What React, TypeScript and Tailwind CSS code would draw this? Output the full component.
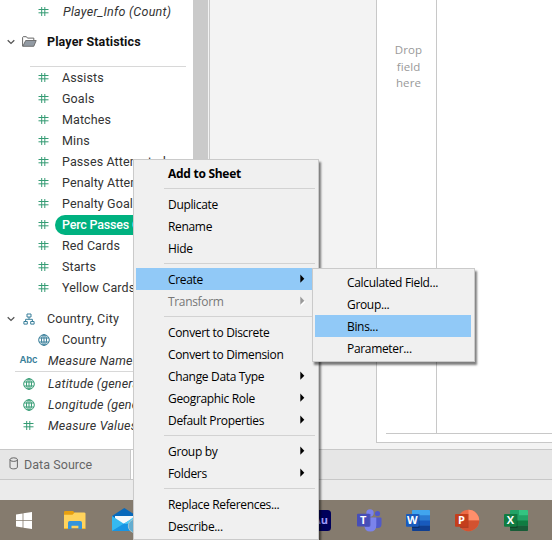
import React from "react";

const Hash = () => (
  <svg width="11" height="11" viewBox="0 0 11 11" className="block shrink-0" fill="none" stroke="#359c74" strokeWidth="1">
    <path d="M3.7 1v9M6.8 1v9M.5 3.5h10M.5 6.8h10" />
  </svg>
);

const Globe = ({ color }: { color: string }) => (
  <svg width="12" height="12" viewBox="0 0 12 12" className="block shrink-0" fill="none" stroke={color} strokeWidth="1">
    <circle cx="6" cy="6" r="5.3" />
    <ellipse cx="6" cy="6" rx="2.5" ry="5.3" />
    <path d="M6 .7v10.6M1.2 4h9.6M1.2 8h9.6" />
  </svg>
);

const Chevron = () => (
  <svg width="8" height="6" viewBox="0 0 8 6" className="block" fill="none" stroke="#555" strokeWidth="1.3">
    <path d="M.7 1.2 4 4.4l3.3-3.2" />
  </svg>
);

const FolderOpen = () => (
  <svg width="15" height="11" viewBox="0 0 15 11" className="block">
    <path d="M.6 10.2V1.4L1.2.7h3.2l1.1 1.4h6.3v2" fill="none" stroke="#666" />
    <path d="M.8 10.3 3.7 4.5h10.5l-2.4 5.8z" fill="#929aa3" stroke="#666" strokeWidth=".9" />
  </svg>
);

const Hierarchy = () => (
  <svg width="12" height="12" viewBox="0 0 12 12" className="block" fill="none" stroke="#397f9a">
    <path d="M4 1h4v3H4zM.9 8.5h3.4v2.6H.9zM7.7 8.5h3.4v2.6H7.7zM6 4v2.3M2.6 8.5V6.3h6.8v2.2" />
  </svg>
);

const Field = ({ label, selected = false }: { label: string; selected?: boolean }) => (
  <div className="flex h-[21px] items-center pl-[38px]">
    <Hash />
    <div className={`ml-[6px] flex h-5 flex-1 items-center whitespace-nowrap pl-[7px] pt-[2px] ${selected ? "rounded-l-full bg-[#00b180] font-medium tracking-[-0.2px] text-white" : "tracking-[0.1px]"}`}>
      {label}
    </div>
  </div>
);

const Generated = ({ icon, label }: { icon: React.ReactNode; label: string }) => (
  <div className="flex h-[21px] items-center whitespace-nowrap">
    <div className="flex w-12 shrink-0 justify-center pl-[9px]">{icon}</div>
    <span className="pt-[2px] italic tracking-[0.2px]">{label}</span>
  </div>
);

const DataPane = () => (
  <aside className="h-[449px] w-[193px] shrink-0 overflow-hidden bg-white font-['Roboto',sans-serif] text-[12.5px] text-[#333]">
    <div className="mt-px flex h-[21px] items-center pl-[38px]">
      <Hash />
      <span className="ml-[14px] pt-[2px] italic tracking-[0.25px]">Player_Info (Count)</span>
    </div>
    <div className="mt-[9px] flex h-[21px] items-center pl-[7px]">
      <Chevron />
      <span className="ml-[7px]"><FolderOpen /></span>
      <span className="ml-[10px] pt-[2px] font-bold tracking-[0.12px] text-[#111]">Player Statistics</span>
    </div>
    <div className="ml-[30px] mt-[14px] h-px w-[156px] bg-[#d8d8d8]" />
    <div>
      <Field label="Assists" />
      <Field label="Goals" />
      <Field label="Matches" />
      <Field label="Mins" />
      <Field label="Passes Attempted" />
      <Field label="Penalty Attempted" />
      <Field label="Penalty Goals" />
      <Field label="Perc Passes Comp" selected />
      <Field label="Red Cards" />
      <Field label="Starts" />
      <Field label="Yellow Cards" />
    </div>
    <div className="mt-[10px] flex h-[21px] items-center pl-[7px]">
      <Chevron />
      <span className="ml-2"><Hierarchy /></span>
      <span className="ml-3 pt-[2px] tracking-[0.2px]">Country, City</span>
    </div>
    <div className="flex h-[21px] items-center pl-[38px]">
      <Globe color="#397f9a" />
      <span className="ml-3 pt-[2px] tracking-[0.15px]">Country</span>
    </div>
    <Generated icon={<span className="font-['Inter',sans-serif] text-[9.5px] font-semibold tracking-[-0.1px] text-[#397f9a]">Abc</span>} label="Measure Names" />
    <div className="ml-[15px] h-px bg-[#d8d8d8]" />
    <div className="pt-px">
      <Generated icon={<Globe color="#359c74" />} label="Latitude (generated)" />
      <Generated icon={<Globe color="#359c74" />} label="Longitude (generated)" />
      <Generated icon={<Hash />} label="Measure Values" />
    </div>
  </aside>
);

const Arrow = ({ muted = false }: { muted?: boolean }) => (
  <svg width="6" height="10" viewBox="0 0 6 10" className="mr-[8px]">
    {muted && <path d="m1 2 4.5 4L1 10z" fill="#fff" />}
    <path d="m.3.6 4 4.1-4 4.1z" fill={muted ? "#999" : "#000"} />
  </svg>
);

const Item = ({ label, arrow, bold, muted, active }: { label: string; arrow?: boolean; bold?: boolean; muted?: boolean; active?: boolean }) => (
  <div className={`flex h-[22px] justify-between whitespace-nowrap pl-8 pt-px leading-[22px] ${active ? "bg-[#91c9f7]" : ""} ${muted ? "text-[#777]" : "text-black"} ${bold ? "font-bold tracking-[-0.28px]" : "tracking-[-0.33px]"}`}>
    <span>{label}</span>
    {arrow && <span className="pt-[5px] leading-none"><Arrow muted={muted} /></span>}
  </div>
);

const Separator = () => (
  <div className="flex h-[9px] items-center">
    <div className="-mr-[1px] ml-7 h-px flex-1 bg-[#d2d2d2]" />
  </div>
);

const menuBase = "absolute border border-[#cacaca] bg-[#f0f0f0] font-['Open_Sans','Noto_Sans',sans-serif] text-[12px] shadow-[2px_3px_2px_rgba(0,0,0,0.5)]";

const FieldMenu = () => (
  <div className={`${menuBase} left-[133px] top-[159px] h-[381px] w-[186px] pl-[2px] pr-[4px] pt-[2px]`}>
    <Item label="Add to Sheet" bold />
    <Separator />
    <Item label="Duplicate" />
    <Item label="Rename" />
    <Item label="Hide" />
    <Separator />
    <Item label="Create" arrow active />
    <Item label="Transform" arrow muted />
    <Separator />
    <Item label="Convert to Discrete" />
    <Item label="Convert to Dimension" />
    <Item label="Change Data Type" arrow />
    <Item label="Geographic Role" arrow />
    <Item label="Default Properties" arrow />
    <Separator />
    <Item label="Group by" arrow />
    <Item label="Folders" arrow />
    <Separator />
    <Item label="Replace References..." />
    <Item label="Describe..." />
  </div>
);

const CreateMenu = () => (
  <div className={`${menuBase} left-[312px] top-[268px] h-[94px] w-[163px] pl-[2px] pr-[3px] pt-[2px]`}>
    <Item label="Calculated Field..." />
    <Item label="Group..." />
    <Item label="Bins..." active />
    <Item label="Parameter..." />
  </div>
);

const Worksheet = () => (
  <main className="flex h-[449px] flex-1 bg-[#f3f3f3] pl-[166px]">
    <div className="flex h-[443px] flex-1 flex-col border-b border-l border-[#c8c8c8] bg-white">
      <div className="flex h-[433px]">
        <div className="w-[60px] border-r border-[#c8c8c8] pl-[4px] pt-[42px] text-center font-['Open_Sans',sans-serif] text-[11.5px] leading-[16.5px] tracking-[0.1px] text-[#999]">
          Drop<br />field<br />here
        </div>
      </div>
      <div className="ml-[9px] h-px bg-[#c8c8c8]" />
    </div>
  </main>
);

const SheetTabs = () => (
  <div className="flex h-[31px] border-y border-[#c8c8c8] bg-[#e6e6e6]">
    <div className="flex w-[131px] items-center border-r border-[#c8c8c8] pl-[9px] font-['Roboto',sans-serif] text-[12.5px] tracking-[0.05px] text-[#666]">
      <svg width="10" height="13" viewBox="0 0 10 13" fill="none" stroke="#666" className="-mt-[3px]">
        <ellipse cx="4.7" cy="2.6" rx="3.7" ry="1.8" />
        <path d="M1 2.6v7.6c0 2.2 7.4 2.2 7.4 0V2.6" />
      </svg>
      <span className="ml-[5px] pt-[2px]">Data Source</span>
    </div>
    <div className="w-20 bg-white" />
  </div>
);

const Letter = ({ x, children }: { x: number; children: string }) => (
  <text x={x} y="15.4" textAnchor="middle" fontFamily="Open Sans" fontWeight="700" fontSize="11" fill="#fff">{children}</text>
);

const Taskbar = () => (
  <footer className="flex h-10 items-center bg-[#857b6e]">
    <svg width="17" height="17" viewBox="0 0 17 17" className="ml-4 shrink-0" fill="#fff">
      <path d="M0 2.4 6.6 1.4V8H0zM7.4 1.2 16 0v8H7.4zM0 8.8h6.6v6.6L0 14.4zM7.4 8.8H16V17l-8.6-1.3z" />
    </svg>
    <svg width="22" height="18" viewBox="0 0 22 18" className="ml-[31px] shrink-0">
      <path d="M0 1.2Q0 0 1.2 0H9l2 2-2 3H0z" fill="#e8a010" />
      <path d="M0 3.7h8.5l2.2-2.3H20q1.5 0 1.5 1.2v14.7H0z" fill="#ffd35c" />
      <path d="M4 18v-6.3q0-1.7 1.7-1.7h10.6q1.7 0 1.7 1.7V18h-3.6v-3.3H7.5V18z" fill="#3494dc" />
      <path d="M0 17h4v1H0zM18 17h3.5v1H18z" fill="#efb629" />
    </svg>
    <svg width="26" height="26" viewBox="0 0 26 26" className="ml-[26px] shrink-0">
      <path d="M0 9 12.3 1l12.5 8v3H0z" fill="#0869bb" />
      <path d="M3 9h20v11H3z" fill="#f5f9fb" />
      <path d="M0 9l13 8.5L0 24z" fill="#35b9f1" />
      <path d="M25 9v15H0l12-7.5z" fill="#1795e4" />
      <path d="M12 17 23 9v7z" fill="#53cdf6" />
      <circle cx="23" cy="19" r="6.7" fill="#64add0" stroke="#a4c7d2" />
    </svg>
    <svg width="21" height="21" viewBox="0 0 21 21" className="ml-[172px] shrink-0">
      <rect width="21" height="21" rx="3.5" fill="#00005b" />
      <text x="10.5" y="14.2" textAnchor="middle" fontFamily="Open Sans" fontWeight="700" fontSize="11" fill="#9f9cff">Au</text>
    </svg>
    <svg width="25" height="23" viewBox="0 0 25 23" className="ml-[26px] shrink-0">
      <circle cx="20.5" cy="4.5" r="2.6" fill="#5059c9" />
      <path d="M17 8.5h6.5q1 0 1 1V15q0 3.8-3.7 4H17z" fill="#5059c9" />
      <circle cx="13" cy="4" r="3.7" fill="#7b83eb" />
      <path d="M7.5 8.5h11.8v8q0 6-6 6t-5.8-6z" fill="#7b83eb" />
      <path d="M9 5h4.6v11q0 2-2 2H8z" fill="#4f55ae" opacity=".65" />
      <rect y="4.8" width="12.8" height="12.8" rx="1" fill="#464eb8" />
      <Letter x={6.3}>T</Letter>
    </svg>
    <svg width="25" height="23" viewBox="0 0 25 23" className="ml-[24px] shrink-0">
      <rect x="6" y="1" width="18" height="21" rx="1" fill="#2b7cd3" />
      <path d="M6 6.3V2q0-1 1-1h16q1 0 1 1v4.3z" fill="#41a5ee" />
      <path d="M6 11.5h18v5H6z" fill="#185abd" />
      <path d="M6 16.5h18V21q0 1-1 1H7q-1 0-1-1z" fill="#103f91" />
      <path d="M6 5h7.5v14H6z" fill="#000" opacity=".25" />
      <rect y="5" width="12.8" height="12.8" rx="1" fill="#185abd" />
      <Letter x={6.4}>W</Letter>
    </svg>
    <svg width="25" height="23" viewBox="0 0 25 23" className="ml-[24px] shrink-0">
      <circle cx="13.5" cy="11.5" r="10.7" fill="#ed6c47" />
      <path d="M13.5.8a10.7 10.7 0 0 1 10.7 10.7H13.5z" fill="#ff8f6b" />
      <path d="M2.8 11.5h21.4a10.7 10.7 0 0 1-21.4 0z" fill="#d35230" />
      <path d="M6 5h7.5v14H5z" fill="#8d2b15" opacity=".5" />
      <rect y="5" width="12.8" height="12.8" rx="1" fill="#c43e1c" />
      <Letter x={6.5}>P</Letter>
    </svg>
    <svg width="25" height="23" viewBox="0 0 25 23" className="ml-[24px] shrink-0">
      <rect x="6" y="1" width="18" height="21" rx="1" fill="#21a366" />
      <path d="M15 1h8q1 0 1 1v4.3h-9z" fill="#33c481" />
      <path d="M6 11.5h18v5H6z" fill="#107c41" />
      <path d="M6 16.5h18V21q0 1-1 1H7q-1 0-1-1z" fill="#185c37" />
      <path d="M6 5h7.5v14H6z" fill="#000" opacity=".25" />
      <rect y="5" width="12.8" height="12.8" rx="1" fill="#107c41" />
      <Letter x={6.4}>X</Letter>
    </svg>
  </footer>
);

export default function App() {
  return (
    <div className="relative flex h-[540px] w-[552px] flex-col overflow-hidden bg-white">
      <div className="flex h-[449px] shrink-0">
        <DataPane />
        <div className="w-[15px] shrink-0 bg-[#cacaca]" />
        <div className="w-[2px] shrink-0 border-r border-[#cacaca] bg-[#f3f3f3]" />
        <Worksheet />
      </div>
      <SheetTabs />
      <div className="h-5 bg-[#ebebeb]" />
      <Taskbar />
      <FieldMenu />
      <CreateMenu />
    </div>
  );
}
